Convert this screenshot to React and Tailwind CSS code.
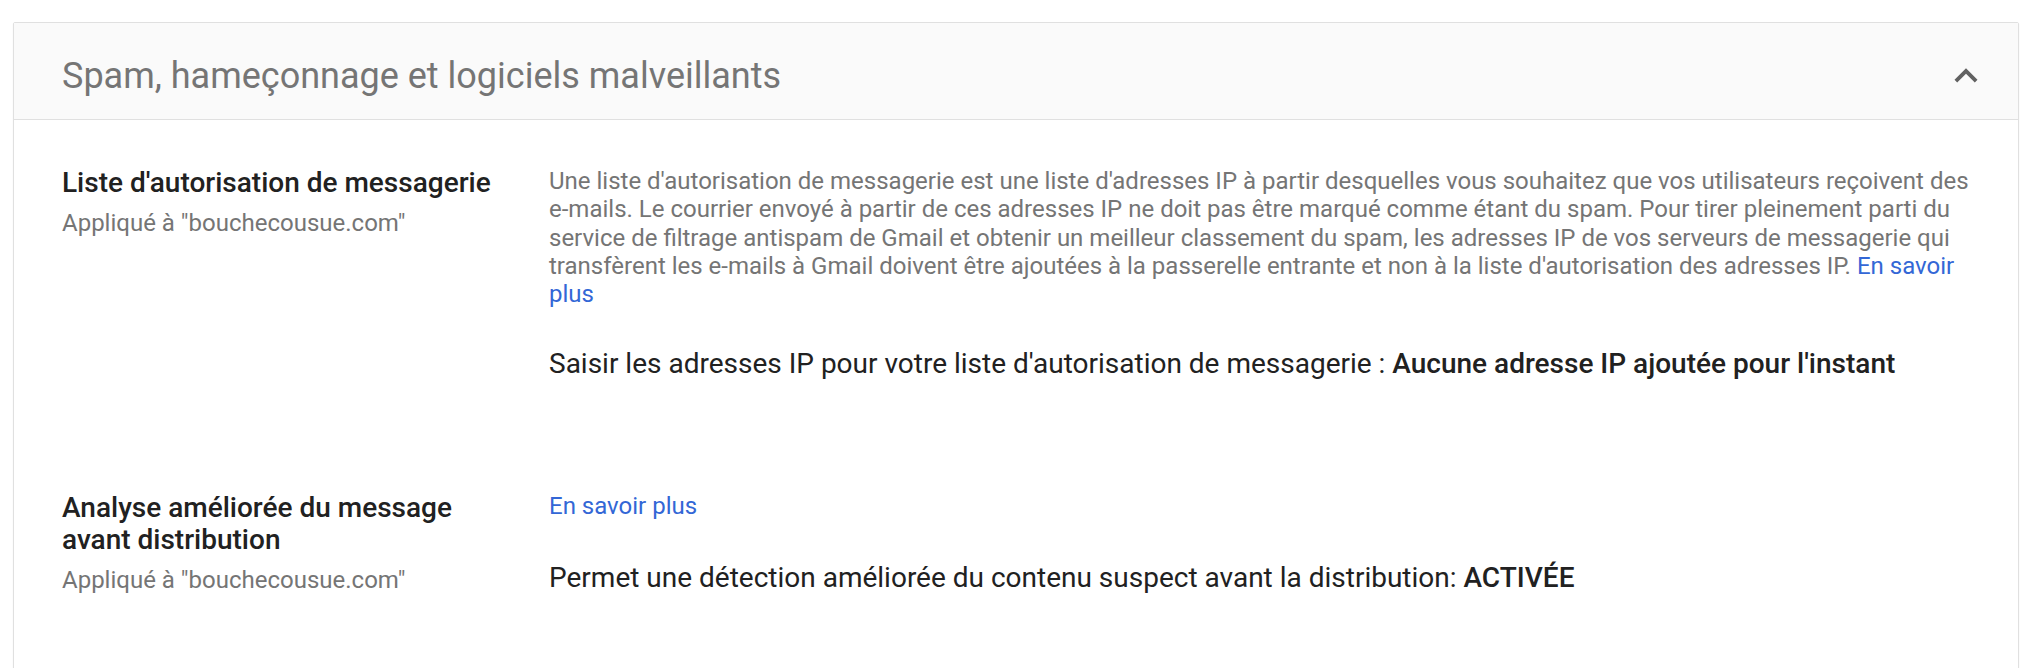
const ChevronUp = () => (
  <svg className="w-[46px] h-[46px] text-[#616161]" viewBox="0 0 24 24" fill="currentColor">
    <path d="M12 8l-6 6 1.41 1.41L12 10.83l4.59 4.58L18 14z" />
  </svg>
);

const SettingRow = ({ title, scope, children }) => (
  <div className="flex">
    <div className="w-[487px] shrink-0 pr-6">
      <h3 className="text-[28px] leading-[32px] font-medium text-[#212121]">{title}</h3>
      <p className="mt-[10px] text-[24px] leading-[28px] text-[#757575]">{scope}</p>
    </div>
    <div className="flex-1">{children}</div>
  </div>
);

export default function App() {
  return (
    <div className="min-h-screen bg-white px-[13px] pt-[22px] font-['Roboto',sans-serif]">
      <div className="border border-[#e0e0e0] rounded-[2px] shadow-[0_1px_2px_rgba(0,0,0,0.06)] min-h-[700px]">
        <div className="h-[97px] bg-[#fafafa] border-b border-[#e0e0e0] flex items-center justify-between pt-[10px] pl-[48px] pr-[29px]">
          <h2 className="text-[36px] text-[#757575]">Spam, hameçonnage et logiciels malveillants</h2>
          <ChevronUp />
        </div>

        <div className="pl-[48px] pr-[40px] pt-[47px]">
          <SettingRow title="Liste d'autorisation de messagerie" scope={'Appliqué à "bouchecousue.com"'}>
            <p className="text-[24px] leading-[28.3px] text-[#757575]">
              Une liste d'autorisation de messagerie est une liste d'adresses IP à partir desquelles vous souhaitez que vos utilisateurs reçoivent des <span className="whitespace-nowrap">e-mails.</span> Le courrier envoyé à partir de ces adresses IP ne doit pas être marqué comme étant du spam. Pour tirer pleinement parti du service de filtrage antispam de Gmail et obtenir un meilleur classement du spam, les adresses IP de vos serveurs de messagerie qui transfèrent les <span className="whitespace-nowrap">e-mails</span> à Gmail doivent être ajoutées à la passerelle entrante et non à la liste d'autorisation des adresses IP.{" "}
              <a className="text-[#3367d6]">En savoir plus</a>
            </p>
            <p className="mt-[40px] text-[28px] leading-[32px] text-[#212121]">
              Saisir les adresses IP pour votre liste d'autorisation de messagerie : <span className="font-medium">Aucune adresse IP ajoutée pour l'instant</span>
            </p>
          </SettingRow>

          <div className="h-[112px]" />

          <SettingRow title="Analyse améliorée du message avant distribution" scope={'Appliqué à "bouchecousue.com"'}>
            <a className="block text-[24px] leading-[28px] text-[#3367d6]">En savoir plus</a>
            <p className="mt-[42px] text-[28px] leading-[32px] text-[#212121]">
              Permet une détection améliorée du contenu suspect avant la distribution: <span className="font-medium">ACTIVÉE</span>
            </p>
          </SettingRow>
        </div>
      </div>
    </div>
  );
}
